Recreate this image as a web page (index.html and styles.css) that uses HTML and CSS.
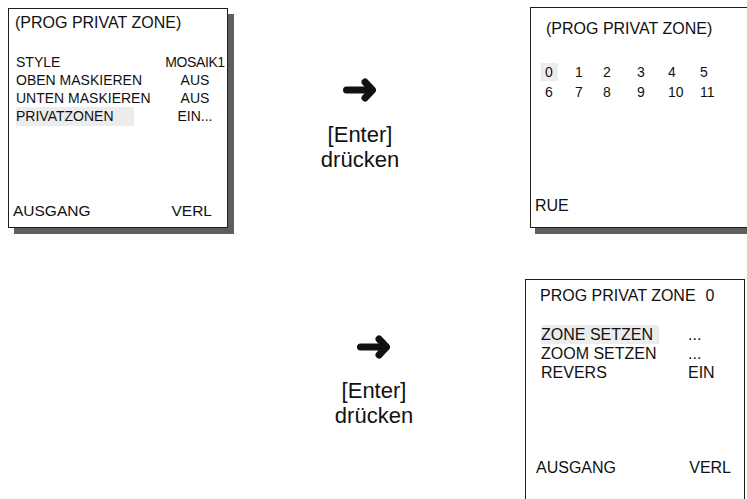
FILE: index.html
```html
<!DOCTYPE html>
<html lang="de">
<head>
    <meta charset="UTF-8">
    <meta name="viewport" content="width=device-width, initial-scale=1.0">
    <title>Privatzonen programmieren</title>
    <link rel="stylesheet" href="styles.css">
</head>
<body>

<section class="step step-first">
    <div class="osd osd-style">
        <div class="osd-title title-style">(PROG PRIVAT ZONE)</div>
        <div class="menu menu-style">
            <div>STYLE</div><div class="value narrow">MOSAIK1</div>
            <div>OBEN MASKIEREN</div><div class="value">AUS</div>
            <div>UNTEN MASKIEREN</div><div class="value">AUS</div>
            <div class="selected sel-style">PRIVATZONEN</div><div class="value">EIN...</div>
        </div>
        <div class="osd-foot foot-style">
            <span>AUSGANG</span>
            <span>VERL</span>
        </div>
    </div>

    <div class="hint hint-first">
        <svg class="arrow" width="34" height="24" viewBox="0 0 34 24">
            <path d="M3.5 12H27" stroke="#111" stroke-width="7" stroke-linecap="round"/>
            <path d="M22 4L29.5 12L22 20" fill="none" stroke="#111" stroke-width="7" stroke-linecap="round" stroke-linejoin="round"/>
        </svg>
        <div class="hint-text">[Enter]<br>drücken</div>
    </div>

    <div class="osd osd-zones">
        <div class="osd-title title-zones">(PROG PRIVAT ZONE)</div>
        <div class="zones">
            <div><span class="selected sel-zone">0</span></div>
            <div>1</div><div>2</div><div>3</div><div>4</div><div>5</div>
            <div>6</div><div>7</div><div>8</div><div>9</div><div>10</div><div>11</div>
        </div>
        <div class="osd-foot foot-zones">
            <span>RUE</span>
        </div>
    </div>
</section>

<section class="step step-second">
    <div class="hint hint-second">
        <svg class="arrow" width="34" height="24" viewBox="0 0 34 24">
            <path d="M3.5 12H27" stroke="#111" stroke-width="7" stroke-linecap="round"/>
            <path d="M22 4L29.5 12L22 20" fill="none" stroke="#111" stroke-width="7" stroke-linecap="round" stroke-linejoin="round"/>
        </svg>
        <div class="hint-text">[Enter]<br>drücken</div>
    </div>

    <div class="osd osd-zone">
        <div class="osd-title title-zone">PROG PRIVAT ZONE<span class="zone-no">0</span></div>
        <div class="menu menu-zone">
            <div class="selected sel-wide">ZONE SETZEN</div><div>...</div>
            <div>ZOOM SETZEN</div><div>...</div>
            <div>REVERS</div><div>EIN</div>
        </div>
        <div class="osd-foot foot-zone">
            <span>AUSGANG</span>
            <span>VERL</span>
        </div>
    </div>
</section>

</body>
</html>
```

FILE: styles.css
```css
* {
    box-sizing: border-box;
}

body {
    margin: 0;
    width: 747px;
    height: 499px;
    overflow: hidden;
    font-family: "Liberation Sans", Arial, sans-serif;
    color: #111;
    background-color: #ffffff;
}

.step {
    display: flex;
    align-items: flex-start;
}

.step-first {
    height: 240px;
    padding-left: 8px;
}

.step-second {
    padding-left: 314px;
}

/* on-screen menu panels */
.osd {
    display: flex;
    flex-direction: column;
    flex-shrink: 0;
    border: 1px solid #1e1e1e;
    background-color: #ffffff;
}

.osd-style {
    width: 220px;
    height: 220px;
    margin-top: 8px;
    box-shadow: 6px 6px 0 #5e5e5e;
}

.osd-zones {
    width: 232px;
    height: 221px;
    margin-top: 7px;
    margin-left: 110px;
    box-shadow: 5px 6px 0 #5e5e5e;
}

.osd-zone {
    width: 220px;
    height: 262px;
    margin-top: 39px;
    margin-left: 91px;
}

.osd-title {
    font-size: 16px;
    line-height: 18px;
    white-space: nowrap;
}

.title-style {
    margin: 5px 0 0 6px;
}

.title-zones {
    margin: 12px 0 0 15px;
}

.title-zone {
    margin: 7px 0 0 14px;
}

.zone-no {
    margin-left: 10px;
}

.menu {
    display: grid;
    white-space: nowrap;
}

.menu-style {
    grid-template-columns: 149px 60px;
    margin-top: 21px;
    padding-left: 7px;
    font-size: 14px;
    line-height: 18px;
}

.menu-zone {
    grid-template-columns: 147px auto;
    margin-top: 20px;
    padding-left: 15px;
    font-size: 16px;
    line-height: 19px;
}

.value {
    text-align: center;
}

.narrow {
    letter-spacing: -0.4px;
}

.selected {
    background-color: #ececec;
}

.sel-style {
    width: 118px;
    height: 19px;
}

.sel-wide {
    width: 118px;
}

.zones {
    display: grid;
    grid-template-columns: 30px 28px 34px 31px 32px 30px;
    margin-top: 24px;
    padding-left: 14px;
    font-size: 14px;
    line-height: 20px;
}

.sel-zone {
    display: inline-block;
    height: 18px;
    line-height: 18px;
    margin-left: -4px;
    padding: 0 5px 0 4px;
}

.osd-foot {
    display: flex;
    justify-content: space-between;
    line-height: 18px;
    white-space: nowrap;
}

.foot-style {
    margin-top: auto;
    padding: 0 15px 7px 4px;
    font-size: 15.5px;
}

.foot-zones {
    margin-top: auto;
    padding: 0 0 12px 4px;
    font-size: 16px;
}

.foot-zone {
    margin-top: 77px;
    padding: 0 13px 0 10px;
    font-size: 16px;
}

/* arrow + instruction between panels */
.hint {
    width: 120px;
    flex-shrink: 0;
    text-align: center;
}

.hint-first {
    margin-top: 78px;
    margin-left: 72px;
}

.hint-second {
    margin-top: 95px;
}

.arrow {
    display: block;
    margin: 0 auto;
}

.hint-text {
    margin-top: 20px;
    font-size: 22px;
    line-height: 25px;
}

.hint-second .hint-text {
    margin-top: 19px;
}
```
